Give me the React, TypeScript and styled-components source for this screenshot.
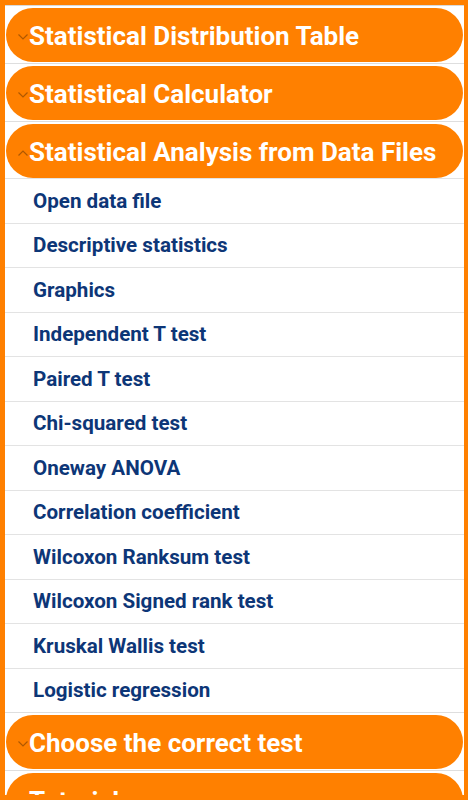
import styled, { createGlobalStyle } from "styled-components";

const GlobalStyle = createGlobalStyle`
  html, body {
    margin: 0;
    padding: 0;
    background: #ff8000;
  }
  body {
    font-family: Roboto, "Noto Sans", "Liberation Sans", sans-serif;
  }
`;

const Page = styled.div`
  padding: 5px 4px 5px 5px;
  height: 800px;
  box-sizing: border-box;
`;

const Panel = styled.div`
  background: #ffffff;
  height: 790px;
  overflow: hidden;
  border-top: 1px solid #d9d9d9;
  box-sizing: border-box;
`;

const Section = styled.div`
  border-bottom: 1px solid #dedede;
`;

const Header = styled.div`
  display: flex;
  align-items: center;
  gap: 1px;
  height: 54px;
  margin: 2px 1px 1px 1px;
  padding-left: 12px;
  padding-top: 2px;
  box-sizing: border-box;
  background: #ff8000;
  border-radius: 27px;
  color: #ffffff;
  font-size: 26px;
  font-weight: 700;
  white-space: nowrap;
  overflow: hidden;
`;

const Chevron = styled.svg`
  flex: none;
  width: 10px;
  height: 6px;
  margin-top: 2px;
`;

const Item = styled.div`
  display: flex;
  align-items: center;
  height: 43.5px;
  padding-left: 28px;
  border-bottom: 1px solid #e3e3e3;
  color: #0d3677;
  font-size: 20.6px;
  font-weight: 700;
`;

const ItemList = styled.div`
  border-top: 1px solid #e3e3e3;
  margin-top: -1px;
  & > div:last-child {
    border-bottom: none;
  }
`;

function Arrow({ up }: { up?: boolean }) {
  return (
    <Chevron viewBox="0 0 10 6">
      <polyline
        points={up ? "0.5,5.5 5,1 9.5,5.5" : "0.5,0.5 5,5 9.5,0.5"}
        fill="none"
        stroke="rgba(110,55,0,0.55)"
        strokeWidth="1.2"
      />
    </Chevron>
  );
}

const items = [
  "Open data file",
  "Descriptive statistics",
  "Graphics",
  "Independent T test",
  "Paired T test",
  "Chi-squared test",
  "Oneway ANOVA",
  "Correlation coefficient",
  "Wilcoxon Ranksum test",
  "Wilcoxon Signed rank test",
  "Kruskal Wallis test",
  "Logistic regression",
];

export default function App() {
  return (
    <>
      <GlobalStyle />
      <Page>
        <Panel>
          <Section>
            <Header>
              <Arrow />
              Statistical Distribution Table
            </Header>
          </Section>
          <Section>
            <Header>
              <Arrow />
              Statistical Calculator
            </Header>
          </Section>
          <Section>
            <Header>
              <Arrow up />
              Statistical Analysis from Data Files
            </Header>
            <ItemList>
              {items.map((t) => (
                <Item key={t}>{t}</Item>
              ))}
            </ItemList>
          </Section>
          <Section>
            <Header>
              <Arrow />
              Choose the correct test
            </Header>
          </Section>
          <Section>
            <Header>
              <Arrow />
              Tutorials
            </Header>
          </Section>
        </Panel>
      </Page>
    </>
  );
}
